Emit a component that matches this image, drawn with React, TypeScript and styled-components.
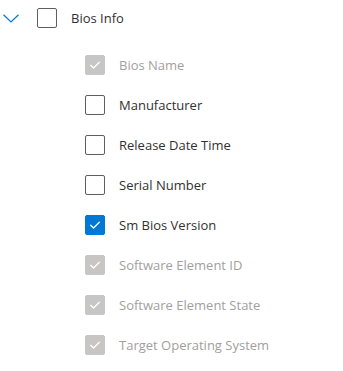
import React from "react";
import styled, { createGlobalStyle } from "styled-components";

const Global = createGlobalStyle`
  html, body { margin: 0; padding: 0; background: #ffffff; }
  body { font-family: "Open Sans", "Noto Sans", sans-serif; }
`;

const Tree = styled.div`
  display: flex;
  flex-direction: column;
  width: 343px;
`;

const HeaderRow = styled.div`
  display: flex;
  align-items: center;
  height: 36px;
  padding-left: 3px;
`;

const Chevron = styled.svg`
  width: 16px;
  height: 9px;
  margin-right: 18px;
  flex: none;
`;

const List = styled.div`
  display: flex;
  flex-direction: column;
  padding-top: 9px;
  padding-left: 85px;
`;

const Row = styled.label`
  display: flex;
  align-items: center;
  height: 40px;
`;

const Box = styled.span<{ $state: "off" | "on" | "disabled" }>`
  box-sizing: border-box;
  width: 20px;
  height: 20px;
  border-radius: 2px;
  flex: none;
  display: flex;
  align-items: center;
  justify-content: center;
  border: 1px solid
    ${(p) => (p.$state === "off" ? "#605e5c" : p.$state === "on" ? "#0078d4" : "#c8c6c4")};
  background: ${(p) => (p.$state === "off" ? "#ffffff" : p.$state === "on" ? "#0078d4" : "#c8c6c4")};
  margin-right: 14px;
`;

const Label = styled.span<{ $disabled?: boolean; $size?: number }>`
  font-size: 13px;
  color: ${(p) => (p.$disabled ? "#a19f9d" : "#323130")};
  white-space: nowrap;
  line-height: 20px;
`;

const Check = () => (
  <svg width="20" height="20" viewBox="0 0 20 20">
    <path d="M5.2 10.2 L8.4 13.3 L14.8 6.9" fill="none" stroke="#ffffff" strokeWidth="1.4" strokeLinecap="round" strokeLinejoin="round" />
  </svg>
);

type Item = { label: string; state: "off" | "on" | "disabled" };

const items: Item[] = [
  { label: "Bios Name", state: "disabled" },
  { label: "Manufacturer", state: "off" },
  { label: "Release Date Time", state: "off" },
  { label: "Serial Number", state: "off" },
  { label: "Sm Bios Version", state: "on" },
  { label: "Software Element ID", state: "disabled" },
  { label: "Software Element State", state: "disabled" },
  { label: "Target Operating System", state: "disabled" },
];

export default function App() {
  return (
    <>
      <Global />
      <Tree>
        <HeaderRow>
          <Chevron viewBox="0 0 16 9">
            <path d="M0.5 0.8 L8 8 L15.5 0.8" fill="none" stroke="#0078d4" strokeWidth="1.2" />
          </Chevron>
          <Box $state="off" />
          <Label>Bios Info</Label>
        </HeaderRow>
        <List>
          {items.map((it) => (
            <Row key={it.label}>
              <Box $state={it.state}>{it.state !== "off" && <Check />}</Box>
              <Label $disabled={it.state === "disabled"}>{it.label}</Label>
            </Row>
          ))}
        </List>
      </Tree>
    </>
  );
}
